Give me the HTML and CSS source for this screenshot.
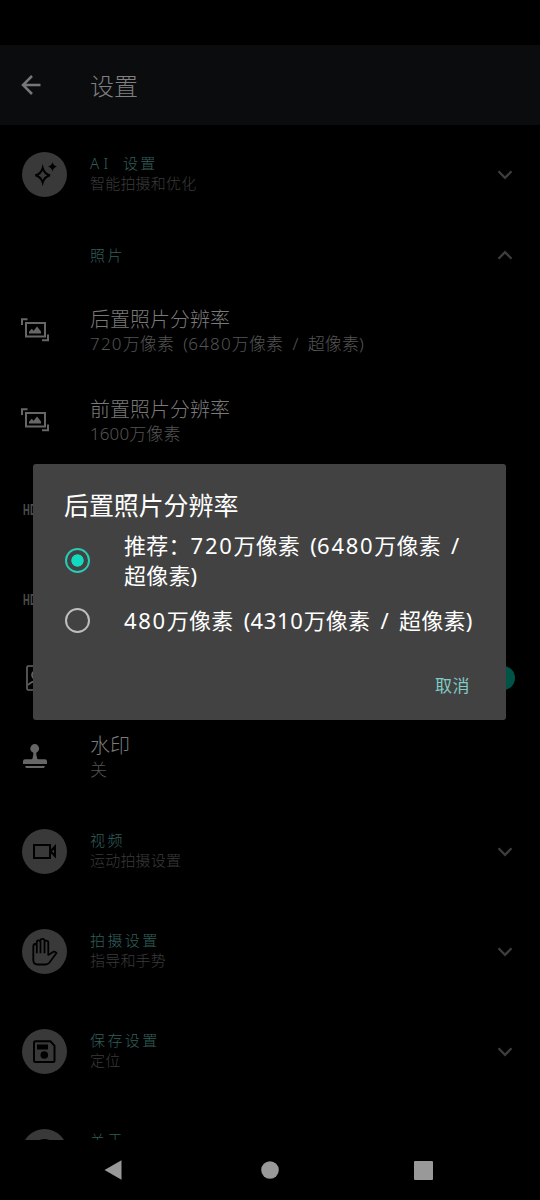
FILE: index.html
```html
<!DOCTYPE html>
<html lang="zh-CN">
<head>
<meta charset="utf-8">
<title>设置</title>
<link rel="stylesheet" href="styles.css">
</head>
<body>
<svg width="0" height="0" class="defs">
  <symbol id="down" viewBox="0 0 16 10"><path d="M1.500 1.300 8 7.800l6.500-6.500" fill="none" stroke="currentColor" stroke-width="2.300"/></symbol>
  <symbol id="resolution" viewBox="0 0 28 24"><path d="M1 7V1.200h5.500M27 16.500V22.300h-6M5 5h19v13.500H5z" fill="none" stroke="currentColor" stroke-width="2"/><path d="M8 15.500v-1.800l2.700-3 2 2 3.300-4.200 4 5v2z" fill="currentColor"/></symbol>
</svg>
<div class="screen">
  <header class="appbar">
    <svg class="back" width="20" height="20" viewBox="0 0 20 20"><path d="M19.500 10H2M11 1 2 10l9 9" fill="none" stroke="currentColor" stroke-width="2.500"/></svg>
    <h1 class="appbar-title">设置</h1>
  </header>
  <main class="list">
    <section class="row group first">
      <div class="lead"><span class="disc"><svg width="45" height="45" viewBox="0 0 45 45"><path d="M20.700 16q1.600 6 7.300 7.300-5.700 1.600-7.300 7.300-1.600-5.700-7.300-7.300 5.700-1.300 7.300-7.300z" fill="none" stroke="#000" stroke-width="2"/><path d="M30.500 10q.8 3.700 4.500 4.700-3.700.9-4.500 4.600-.8-3.700-4.500-4.600 3.700-1 4.500-4.700z"/></svg></span></div>
      <div class="body"><div class="g-title"><span class="latin">AI</span> 设置</div><div class="g-sub">智能拍摄和优化</div></div>
      <svg class="chev" width="16" height="10"><use href="#down"/></svg>
    </section>
    <section class="row group short">
      <div class="lead"></div>
      <div class="body"><div class="g-title">照片</div></div>
      <svg class="chev up" width="16" height="10"><use href="#down"/></svg>
    </section>
    <section class="row item">
      <div class="lead"><svg class="res" width="28" height="24"><use href="#resolution"/></svg></div>
      <div class="body"><div class="i-title">后置照片分辨率</div><div class="i-sub"><span class="num">720</span>万像素 (<span class="num">6480</span>万像素 / 超像素)</div></div>
    </section>
    <section class="row item">
      <div class="lead"><svg class="res" width="28" height="24"><use href="#resolution"/></svg></div>
      <div class="body"><div class="i-title">前置照片分辨率</div><div class="i-sub">1600万像素</div></div>
    </section>
    <section class="row item"><div class="lead hdr"><span>HDR</span></div></section>
    <section class="row item"><div class="lead hdr"><span>HDR</span></div></section>
    <section class="row item toggle-row">
      <div class="lead"><svg class="portrait" width="24" height="26" viewBox="0 0 24 26" fill="none" stroke="currentColor" stroke-width="1.600"><rect x="1" y="1" width="22" height="24" rx="1.500"/><circle cx="10" cy="10" r="4"/><path d="M2 20q5-5 10-3"/></svg></div>
      <span class="switch"></span>
    </section>
    <section class="row item">
      <div class="lead"><svg class="stamp" width="24" height="24" viewBox="0 0 24 24" fill="currentColor"><circle cx="11.700" cy="4.500" r="4.400"/><path d="M10 8h3.500l-.3 2 1 4.500q0 .8 1 .8H22q2 0 2 2V20H0v-2.700q0-2 2-2h6.500q1 0 1-.8L10.500 10zM2 22h20l-1 2H3z"/></svg></div>
      <div class="body"><div class="i-title">水印</div><div class="i-sub">关</div></div>
    </section>
    <section class="row group">
      <div class="lead"><span class="disc"><svg width="45" height="45" viewBox="0 0 45 45" fill="none" stroke="#000" stroke-width="2"><path d="M12 16h16v13H12zM28.500 22.200l4.500-4.700v9.400z"/></svg></span></div>
      <div class="body"><div class="g-title">视频</div><div class="g-sub">运动拍摄设置</div></div>
      <svg class="chev" width="16" height="10"><use href="#down"/></svg>
    </section>
    <section class="row group">
      <div class="lead"><span class="disc"><svg width="45" height="45" viewBox="0 0 45 45" fill="none" stroke="#000" stroke-width="1.800" stroke-linejoin="round"><path d="M11.300 31V17.500q0-2.500 2-2.500 1.500 0 1.500 1.500v-3.500q0-1.700 1.700-1.700 1.900 0 1.900 1.700V11.500q0-1.700 2-1.700 2.100 0 2.100 1.700V13q0-1.300 1.700-1.300 2.100 0 2.100 2v12.200l5.200-3.200q1.700-.5 3 1.300l-7 9.500q-1.600 2-4 2h-8q-4.200 0-4.200-4.500zM14.800 16v8.200M18.500 13v11.200M22.500 13v11.200"/></svg></span></div>
      <div class="body"><div class="g-title">拍摄设置</div><div class="g-sub">指导和手势</div></div>
      <svg class="chev" width="16" height="10"><use href="#down"/></svg>
    </section>
    <section class="row group">
      <div class="lead"><span class="disc"><svg width="45" height="45" viewBox="0 0 45 45"><path d="M13.500 12.300h15l4 4.500v14.700q0 1.500-1.500 1.500H13.500q-1.500 0-1.500-1.500V13.800q0-1.500 1.500-1.500z" fill="none" stroke="#000" stroke-width="2"/><path d="M15 15.500h11v5H15z"/><circle cx="22.300" cy="26" r="3.800"/></svg></span></div>
      <div class="body"><div class="g-title">保存设置</div><div class="g-sub">定位</div></div>
      <svg class="chev" width="16" height="10"><use href="#down"/></svg>
    </section>
    <section class="row group">
      <div class="lead"><span class="disc"><svg width="45" height="45" viewBox="0 0 45 45"><circle cx="22.500" cy="22.500" r="11.500" fill="none" stroke="#000" stroke-width="2"/></svg></span></div>
      <div class="body about"><div class="g-title">关于</div></div>
    </section>
  </main>
  <nav class="nav">
    <svg width="18" height="20" viewBox="0 0 18 20"><path d="M17.500.2v19.600L.5 10z"/></svg>
    <svg width="18" height="18" viewBox="0 0 18 18"><circle cx="9" cy="9" r="8.800"/></svg>
    <svg width="19" height="19" viewBox="0 0 19 19"><rect width="19" height="19" rx="1"/></svg>
  </nav>
  <div class="dialog" role="dialog">
    <h2 class="d-title">后置照片分辨率</h2>
    <div class="option"><span class="radio on"></span><span class="label">推荐：<span class="num">720</span>万像素 (<span class="num">6480</span>万像素 /<br>超像素)</span></div>
    <div class="option second"><span class="radio"></span><span class="label"><span class="num">480</span>万像素 (<span class="num narrow">4310</span>万像素 / 超像素)</span></div>
    <div class="actions">取消</div>
  </div>
</div>
</body>
</html>
```
FILE: styles.css
```css
* { box-sizing: border-box; }
body { margin: 0; background: #000; font-family: "Noto Sans", "Noto Sans CJK SC", sans-serif; font-weight: 300; }
h1, h2 { margin: 0; font-weight: inherit; }
.defs { position: absolute; }
.screen { position: relative; width: 540px; height: 1200px; padding-top: 45px; display: flex; flex-direction: column; overflow: hidden; }
.appbar { flex: none; height: 80px; padding-left: 21px; display: flex; align-items: center; background: #0b0c0e; color: #808080; }
.back { width: 20px; margin-right: 49px; color: #777; }
.appbar-title { font-size: 24px; line-height: 30px; padding-top: 1px; }
.list { flex: none; height: 1015px; overflow: hidden; }
.row { display: flex; align-items: center; height: 90px; }
.group { height: 100px; }
.short { height: 60px; }
.toggle-row { height: 66px; }
.lead { flex: none; width: 90px; padding-left: 21px; display: flex; color: #666; }
.body { flex: 1; white-space: nowrap; }
.disc { width: 45px; height: 45px; margin-left: 1px; border-radius: 50%; background: #393939; }
.first .disc { margin-top: -1px; }
.disc svg { display: block; }
.g-title { font-size: 15px; line-height: 20px; letter-spacing: 2.4px; word-spacing: 4px; color: #315f5c; }
.latin { letter-spacing: 4.4px; }
.g-sub { font-size: 15px; line-height: 20px; letter-spacing: .2px; color: #3a3a3a; }
.group .body { padding-bottom: 3px; }
.first .body { padding-bottom: 4px; }
.short .body { padding-bottom: 0; }
.group .about { padding-bottom: 22px; }
.chev { margin: 1px 27px 0 0; color: #3d3d3d; }
.first .chev, .up { margin-top: 0; }
.up { transform: rotate(180deg); }
.i-title { font-size: 20px; line-height: 25px; color: #7a7a7a; }
.i-sub { font-size: 17px; line-height: 24px; letter-spacing: .1px; word-spacing: 4.8px; color: #545454; }
.num { letter-spacing: 1.2px; }
.item .body { padding-top: 2px; }
.hdr { padding-left: 23px; font: 700 14px Roboto, sans-serif; color: #4c4c4c; }
.hdr span { transform: scaleX(.68); transform-origin: left; letter-spacing: .5px; }
.portrait { margin-left: 5px; }
.stamp { margin-left: 2px; }
.switch { margin-left: 401px; width: 24px; height: 24px; border-radius: 50%; background: #005447; }
.nav { flex: none; height: 60px; padding: 0 107px 0 104px; display: flex; align-items: center; justify-content: space-between; fill: #999; }
.nav svg:nth-child(2) { margin-left: 3px; }
.dialog { position: absolute; left: 33px; top: 464px; width: 473px; height: 256px; padding: 24px 31px 0; border-radius: 3px; background: #424242; color: #fff; font-weight: 400; white-space: nowrap; }
.d-title { font-size: 25px; line-height: 34px; letter-spacing: -.1px; }
.option { display: flex; align-items: center; margin-top: 8px; height: 60px; }
.second { margin-top: 15px; height: 30px; }
.radio { flex: none; width: 25px; height: 25px; margin: 0 33px 0 1px; border: 2.5px solid #bebebe; border-radius: 50%; }
.on { border-color: #27cbb6; background: radial-gradient(circle, #12dac0 5.800px, transparent 6.500px); }
.label { font-size: 22px; line-height: 30px; letter-spacing: .2px; word-spacing: 4.3px; padding-left: 1px; }
.label .num { letter-spacing: 1.7px; }
.label .narrow { letter-spacing: .7px; }
.actions { margin-top: 39px; text-align: right; padding-right: 5px; font-size: 17px; line-height: 24px; letter-spacing: .5px; color: #80cbc4; }
```
